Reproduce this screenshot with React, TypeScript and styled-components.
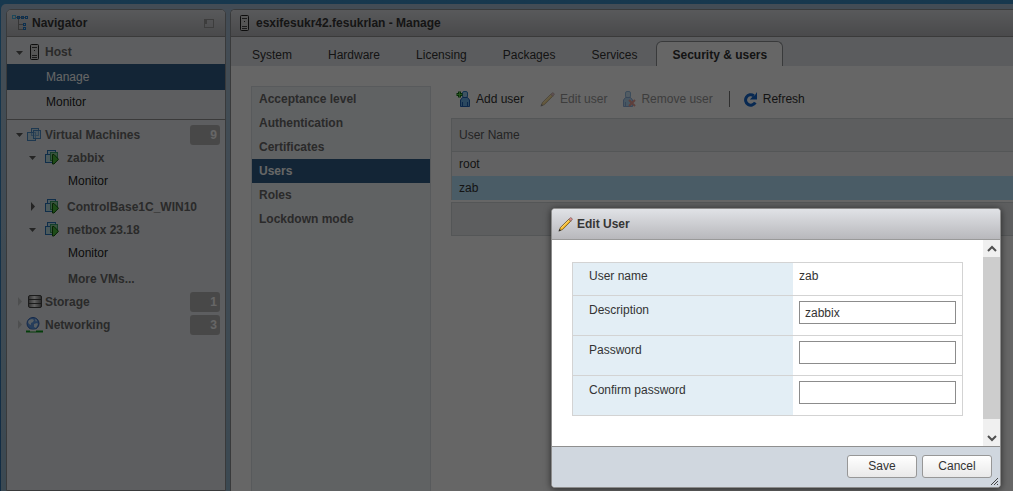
import React from "react";
import styled, { createGlobalStyle } from "styled-components";

const GlobalStyle = createGlobalStyle`
  *, *::before, *::after { box-sizing: border-box; }
  html, body, #root { height: 100%; }
  body {
    margin: 0;
    overflow: hidden;
    font-family: "Liberation Sans", Arial, sans-serif;
    font-size: 12px;
    line-height: 14px;
    color: #333;
  }
  button, input { font: inherit; color: inherit; margin: 0; }
  ul { list-style: none; margin: 0; padding: 0; }
  h1, h2 { font-size: 12px; line-height: 14px; margin: 0; }
  svg { display: block; flex: none; }
`;

/* ---------- shell ---------- */

const Page = styled.div`
  position: relative;
  display: flex;
  flex-direction: column;
  height: 100vh;
  padding: 4px 0 0 1px;
  overflow: hidden;
  background: linear-gradient(#3a8cc4, #2f6ea8);
`;

const Workspace = styled.div`
  flex: 1;
  min-height: 0;
  display: flex;
  gap: 4px;
  padding: 5px 0 0 5px;
  border-top-left-radius: 5px;
  background: linear-gradient(#a9bfd4, #95b6cc);
`;

const Panel = styled.section`
  display: flex;
  flex-direction: column;
  border: 1px solid #8e9195;
  border-bottom: 0;
  border-radius: 5px 5px 0 0;
  overflow: hidden;
`;

const NavPanel = styled(Panel).attrs({ as: "nav" })`
  flex: 0 0 220px;
  border-bottom: 1px solid #8e9195;
  background: #e9ecef;
`;

const MainPanel = styled(Panel).attrs({ as: "main" })`
  flex: 1;
  min-width: 0;
  border-right: 0;
  border-top-right-radius: 0;
  background: #fff;
`;

const PanelHeader = styled.header`
  flex: none;
  display: flex;
  align-items: center;
  gap: 3px;
  height: 27px;
  padding: 0 11px 0 5px;
  border-bottom: 1px solid #929292;
  background: linear-gradient(#dddfe3, #b8b8bc);
`;

const MainHeader = styled(PanelHeader)`
  padding-left: 9px;
  gap: 7px;
`;

const Title = styled.h1`
  flex: 1;
  color: #363636;
`;

/* ---------- navigator ---------- */

const NavGroup = styled.ul<{ $divided?: boolean }>`
  padding: ${(p) => (p.$divided ? "3px 0 5px" : "3px 0")};
  border-bottom: ${(p) => (p.$divided ? "1px solid #929292" : "0")};
`;

const NavRow = styled.li<{ $level: number; $height?: number; $selected?: boolean; $gap?: boolean }>`
  display: flex;
  align-items: center;
  height: ${(p) => p.$height ?? 23}px;
  margin-bottom: ${(p) => (p.$gap ? 3 : 0)}px;
  padding: 0 5px 0 ${(p) => p.$level}px;
  background: ${(p) => (p.$selected ? "#305d87" : "transparent")};
`;

const NavLink = styled.a<{ $tone: "group" | "plain" | "selected" }>`
  flex: 1;
  text-decoration: none;
  white-space: nowrap;
  font-weight: ${(p) => (p.$tone === "group" ? "bold" : "normal")};
  color: ${(p) => ({ group: "#6a6a6a", plain: "#222", selected: "#fff" })[p.$tone]};
`;

const IconSlot = styled.span<{ $width: number }>`
  flex: none;
  display: flex;
  justify-content: center;
  width: ${(p) => p.$width}px;
`;

const Count = styled.span`
  width: 30px;
  height: 20px;
  padding: 3px 3px 0 0;
  border-radius: 3px;
  background: #b5b5b5;
  color: #fff;
  font-weight: bold;
  text-align: right;
`;

/* ---------- main content ---------- */

const Tabs = styled.div`
  flex: none;
  display: flex;
  align-items: flex-end;
  height: 29px;
  padding-left: 3px;
  background: #e4e7eb;
`;

const Tab = styled.button<{ $active?: boolean }>`
  height: 25px;
  margin-left: ${(p) => (p.$active ? 1 : 0)}px;
  padding: 1px ${(p) => (p.$active ? 15 : 17)}px 0;
  border: 1px solid ${(p) => (p.$active ? "#8e9195" : "transparent")};
  border-bottom: 0;
  border-radius: 6px 6px 0 0;
  background: ${(p) => (p.$active ? "#fff" : "transparent")};
  font-weight: ${(p) => (p.$active ? "bold" : "normal")};
  white-space: nowrap;
`;

const Content = styled.div`
  flex: 1;
  min-height: 0;
  display: flex;
  gap: 20px;
  padding: 20px 0 0 20px;
`;

const SideMenu = styled.ul`
  flex: 0 0 180px;
  border: 1px solid #dbe0e6;
  border-bottom: 0;
  background: #f1f4f8;
`;

const SideItem = styled.a<{ $selected?: boolean }>`
  display: block;
  height: 24px;
  padding: 5px 7px;
  font-weight: bold;
  text-decoration: none;
  color: ${(p) => (p.$selected ? "#fff" : "#6a6a6a")};
  background: ${(p) => (p.$selected ? "#305d87" : "transparent")};
`;

const Users = styled.div`
  flex: 1;
  min-width: 0;
`;

const Toolbar = styled.div`
  display: flex;
  align-items: center;
  height: 32px;
  padding: 0 0 6px 5px;
`;

const ToolButton = styled.button`
  display: flex;
  align-items: center;
  gap: 5px;
  height: 22px;
  margin-right: 16px;
  padding: 0;
  border: 0;
  background: none;
  white-space: nowrap;
  &:disabled { color: #999; }
  &:disabled svg { opacity: 0.5; }
`;

const ToolDivider = styled.span`
  width: 1px;
  height: 16px;
  margin-right: 13px;
  background: #777;
`;

const UserTable = styled.table`
  width: 100%;
  border-collapse: separate;
  border-spacing: 0;
  border: 1px solid #d2d6da;
  border-width: 1px 0 0 1px;
  th, td { padding: 0 7px; text-align: left; }
  th {
    height: 33px;
    border-bottom: 1px solid #d2d6da;
    background: #e9ebee;
    font-weight: normal;
    color: #5a5a5a;
  }
`;

const UserRow = styled.tr<{ $selected?: boolean }>`
  height: 24px;
  background: ${(p) => (p.$selected ? "#b9e5ff" : "#f5f6f7")};
`;

const TableFooter = styled.div`
  height: 34px;
  margin-top: 2px;
  border: 1px solid #d2d6da;
  border-right: 0;
  background: #e9ebee;
`;

const Backdrop = styled.div`
  position: absolute;
  inset: 0;
  background: rgba(0, 0, 0, 0.6);
`;

/* ---------- dialog ---------- */

const DialogBox = styled.form`
  position: absolute;
  top: 208px;
  right: 12px;
  width: 450px;
  border: 1px solid #8c8c8c;
  border-radius: 4px;
  overflow: hidden;
  background: #fff;
  box-shadow: 0 1px 7px rgba(0, 0, 0, 0.6);
`;

const DialogHeader = styled.header`
  display: flex;
  align-items: center;
  gap: 4px;
  height: 31px;
  padding: 0 6px;
  border-bottom: 1px solid #999;
  background: linear-gradient(#e0e2e6, #b8b8bc);
`;

const DialogBody = styled.div`
  display: flex;
  justify-content: space-between;
  height: 206px;
  padding: 22px 0 0 20px;
`;

const FormTable = styled.table`
  width: 391px;
  height: 154px;
  table-layout: fixed;
  border-collapse: separate;
  border-spacing: 0;
  border: 1px solid #d3d3d3;
  border-bottom: 0;
  th, td {
    height: 40px;
    padding: 5px 6px 0;
    border-bottom: 1px solid #d3d3d3;
    text-align: left;
    vertical-align: top;
    font-weight: normal;
  }
  th {
    width: 220px;
    padding: 7px 16px 0;
    background: #e3eef5;
  }
  tr:first-child th, tr:first-child td { height: 33px; padding-top: 6px; }
`;

const TextInput = styled.input`
  display: block;
  width: 157px;
  height: 23px;
  padding: 1px 5px 0;
  border: 1px solid #8c8c8c;
  background: #fff;
`;

const ScrollTrack = styled.div`
  display: flex;
  flex-direction: column;
  width: 17px;
  margin-top: -22px;
  background: #f0f0f0;
`;

const ScrollArrow = styled.span`
  display: flex;
  align-items: center;
  justify-content: center;
  height: 17px;
`;

const ScrollThumb = styled.span`
  height: 162px;
  margin-bottom: auto;
  background: #cdcdcd;
`;

const DialogFooter = styled.footer`
  position: relative;
  display: flex;
  justify-content: flex-end;
  gap: 5px;
  height: 41px;
  padding: 8px 8px 0 0;
  border-top: 1px solid #8f8f8f;
  background: #d0d7df;
`;

const DialogButton = styled.button`
  width: 70px;
  height: 23px;
  padding: 0 0 2px;
  border: 1px solid #979797;
  border-radius: 3px;
  background: linear-gradient(#fff, #e9e9e9);
`;

const Grip = styled.svg`
  position: absolute;
  right: 2px;
  bottom: 2px;
`;

/* ---------- icons ---------- */

const Caret = ({ open, faint }: { open?: boolean; faint?: boolean }) => (
  <svg width="9" height="9" viewBox="0 0 9 9">
    <path d={open ? "M1 3h7L4.500 7z" : "M3 0v9l4-4.500z"} fill={faint ? "#c4c6c8" : "#5a5a5a"} />
  </svg>
);

const TreeIcon = () => (
  <svg width="17" height="16" viewBox="0 0 17 16" fill="none" shapeRendering="crispEdges">
    <path d="M6.500 4v10.500H11M6.500 9.500H11" stroke="#888" />
    <path d="M4 2.500h10" stroke="#888" />
    <rect x="0.500" y="0.500" width="3" height="3" stroke="#4bb4e0" />
    <rect x="5.500" y="1.500" width="2" height="2" stroke="#1f78c8" />
    <rect x="9.500" y="1.500" width="2" height="2" stroke="#1f78c8" />
    <rect x="13.500" y="1.500" width="2" height="2" stroke="#1f78c8" />
    <rect x="11.500" y="8.500" width="2" height="2" stroke="#1f78c8" />
    <rect x="11.500" y="12.500" width="2" height="2" stroke="#1f78c8" />
  </svg>
);

const PinIcon = () => (
  <svg width="10" height="9" viewBox="0 0 10 9" shapeRendering="crispEdges">
    <rect x="0.500" y="0.500" width="9" height="8" fill="none" stroke="#999" />
    <rect x="1" y="1" width="2" height="4" fill="#999" />
  </svg>
);

const HostIcon = () => (
  <svg width="9" height="16" viewBox="0 0 9 16">
    <rect x="0.500" y="0.500" width="8" height="15" rx="1" fill="#d4d4d4" stroke="#222" />
    <path d="M2 3.500h5M2 11.500h5M2 13.500h5" stroke="#444" />
    <rect x="4" y="6" width="1" height="1" fill="#333" />
  </svg>
);

const VmsIcon = () => (
  <svg width="15" height="14" viewBox="0 0 15 14" shapeRendering="crispEdges">
    <g fill="#a9d3ee" fillOpacity="0.5" stroke="#4c8cc8">
      <rect x="4.500" y="0.500" width="7" height="7" />
      <rect x="0.500" y="4.500" width="8" height="8" />
      <rect x="6.500" y="2.500" width="7" height="8" />
    </g>
  </svg>
);

const VmOnIcon = () => (
  <svg width="14" height="15" viewBox="0 0 14 15">
    <g shapeRendering="crispEdges">
      <rect x="2.500" y="0.500" width="8" height="7" fill="#bfe0f0" stroke="#2874b8" />
      <rect x="0.500" y="4.500" width="7" height="8" fill="#bde0e6" stroke="#2874b8" />
      <rect x="5.500" y="2.500" width="7" height="8" fill="#8fd09c" stroke="#3aa06a" />
    </g>
    <path d="M7.500 4.500v9.500h1.500L13.500 9.250 9 4.500z" fill="#4cbf3c" stroke="#12550d" />
  </svg>
);

const StorageIcon = () => (
  <svg width="14" height="13" viewBox="0 0 14 13">
    <defs>
      <linearGradient id="disk" x1="0" x2="1" y1="0" y2="0">
        <stop offset="0" stopColor="#777" />
        <stop offset="0.450" stopColor="#f4f4f4" />
        <stop offset="1" stopColor="#666" />
      </linearGradient>
    </defs>
    <rect x="0.500" y="0.500" width="13" height="12" rx="1.500" fill="url(#disk)" stroke="#444" />
    <path d="M1 4.500h12M1 8.500h12" stroke="#444" />
  </svg>
);

const NetworkIcon = () => (
  <svg width="17" height="16" viewBox="0 0 17 16">
    <circle cx="7" cy="6.500" r="6" fill="#5f9ae4" stroke="#2f62b8" />
    <path d="M3 3l3-1 2 1-1 2-2 1v2L3 7 2 5zM8 7l3-1 1 1-2 4-2-1zM9 2l2 1-1 2z" fill="#dcebf8" />
    <path d="M0 14.500h17" stroke="#0c9a1c" strokeWidth="2" />
    <path d="M4 13.500h6" stroke="#f2f2f2" strokeWidth="2" />
  </svg>
);

const Person = () => (
  <>
    <rect x="6.500" y="0.500" width="5" height="6" rx="1.500" fill="#9fd0f2" stroke="#2f80c8" />
    <path d="M4.500 15.500V9l2-2.500h5l2 2.500v6.500z" fill="#6cb4ee" stroke="#1f62b8" />
    <path d="M6.500 11v4.500M11.500 11v4.500" stroke="#1f62b8" />
  </>
);

const AddUserIcon = () => (
  <svg width="15" height="16" viewBox="0 0 15 16">
    <Person />
    <path d="M3.500 0.500v6M0.500 3.500h6" stroke="#17711a" strokeWidth="3" />
    <path d="M3.500 1v5M1 3.500h5" stroke="#5fd04a" />
  </svg>
);

const RemoveUserIcon = () => (
  <svg width="13" height="16" viewBox="4 0 13 16">
    <Person />
    <path d="M10 9l6 6M16 9l-6 6" stroke="#d8402c" strokeWidth="2" />
  </svg>
);

const PencilIcon = () => (
  <svg width="15" height="15" viewBox="0 0 15 15">
    <path d="M1.200 13.800L2.400 10.500 10.800 2.200l2 2L4.500 12.600z" fill="#f3b21c" stroke="#6b5420" strokeWidth="0.800" />
    <path d="M3.300 11L11.200 3.200" stroke="#ffe69a" strokeWidth="0.900" />
    <path d="M10.800 2.200L12.400 0.700q1.900 0 1.900 1.900L12.800 4.200z" fill="#dc8f8c" stroke="#7d5a58" strokeWidth="0.700" />
    <path d="M0.500 14.500l0.900-2.600 1.700 1.700z" fill="#2a2a2a" />
  </svg>
);

const RefreshIcon = () => (
  <svg width="15" height="15" viewBox="0 0 15 15">
    <path d="M12.300 10.500A5.200 5.200 0 1 1 10.800 3.700" fill="none" stroke="#1668cc" strokeWidth="3" />
    <path d="M14 0v7.500H6.800l2.700-2.700L12 3z" fill="#1668cc" />
  </svg>
);

const Chevron = ({ down }: { down?: boolean }) => (
  <svg width="10" height="8" viewBox="0 0 10 8">
    <path d={down ? "M1 2l4 4 4-4" : "M1 6l4-4 4 4"} fill="none" stroke="#505050" strokeWidth="2" />
  </svg>
);

/* ---------- data ---------- */

const tabs = ["System", "Hardware", "Licensing", "Packages", "Services", "Security & users"];
const sections = ["Acceptance level", "Authentication", "Certificates", "Users", "Roles", "Lockdown mode"];

const VmRow = ({ name, open }: { name: string; open?: boolean }) => (
  <NavRow $level={21}>
    <IconSlot $width={9}><Caret open={open} /></IconSlot>
    <IconSlot $width={30}><VmOnIcon /></IconSlot>
    <NavLink href="#" $tone="group">{name}</NavLink>
  </NavRow>
);

const Inventory = ({ name, count, icon, open }: { name: string; count: number; icon: React.ReactNode; open?: boolean }) => (
  <NavRow $level={8}>
    <IconSlot $width={9}><Caret open={open} faint={!open} /></IconSlot>
    <IconSlot $width={21}>{icon}</IconSlot>
    <NavLink href="#" $tone="group">{name}</NavLink>
    <Count>{count}</Count>
  </NavRow>
);

export default function App() {
  return (
    <Page>
      <GlobalStyle />
      <Workspace>
        <NavPanel>
          <PanelHeader>
            <TreeIcon />
            <Title as="h2">Navigator</Title>
            <PinIcon />
          </PanelHeader>
          <NavGroup $divided>
            <NavRow $level={8} $height={24}>
              <IconSlot $width={9}><Caret open /></IconSlot>
              <IconSlot $width={21}><HostIcon /></IconSlot>
              <NavLink href="#" $tone="group">Host</NavLink>
            </NavRow>
            <NavRow $level={39} $height={26} $selected>
              <NavLink href="#" $tone="selected">Manage</NavLink>
            </NavRow>
            <NavRow $level={39} $height={24}>
              <NavLink href="#" $tone="plain">Monitor</NavLink>
            </NavRow>
          </NavGroup>
          <NavGroup>
            <Inventory name="Virtual Machines" count={9} icon={<VmsIcon />} open />
            <VmRow name="zabbix" open />
            <NavRow $level={61} $gap>
              <NavLink href="#" $tone="plain">Monitor</NavLink>
            </NavRow>
            <VmRow name="ControlBase1C_WIN10" />
            <VmRow name="netbox 23.18" open />
            <NavRow $level={61} $gap>
              <NavLink href="#" $tone="plain">Monitor</NavLink>
            </NavRow>
            <NavRow $level={61}>
              <NavLink href="#" $tone="group">More VMs...</NavLink>
            </NavRow>
            <Inventory name="Storage" count={1} icon={<StorageIcon />} />
            <Inventory name="Networking" count={3} icon={<NetworkIcon />} />
          </NavGroup>
        </NavPanel>

        <MainPanel>
          <MainHeader>
            <HostIcon />
            <Title>esxifesukr42.fesukrlan - Manage</Title>
          </MainHeader>
          <Tabs role="tablist">
            {tabs.map((name) => (
              <Tab key={name} type="button" role="tab" $active={name === "Security & users"} aria-selected={name === "Security & users"}>
                {name}
              </Tab>
            ))}
          </Tabs>
          <Content>
            <SideMenu>
              {sections.map((name) => (
                <li key={name}>
                  <SideItem href="#" $selected={name === "Users"}>{name}</SideItem>
                </li>
              ))}
            </SideMenu>
            <Users>
              <Toolbar>
                <ToolButton type="button"><AddUserIcon />Add user</ToolButton>
                <ToolButton type="button" disabled><PencilIcon />Edit user</ToolButton>
                <ToolButton type="button" disabled><RemoveUserIcon />Remove user</ToolButton>
                <ToolDivider />
                <ToolButton type="button"><RefreshIcon />Refresh</ToolButton>
              </Toolbar>
              <UserTable>
                <thead>
                  <tr><th scope="col">User Name</th></tr>
                </thead>
                <tbody>
                  <UserRow><td>root</td></UserRow>
                  <UserRow $selected><td>zab</td></UserRow>
                </tbody>
              </UserTable>
              <TableFooter />
            </Users>
          </Content>
        </MainPanel>
      </Workspace>

      <Backdrop />

      <DialogBox role="dialog" aria-labelledby="dialog-title" onSubmit={(e) => e.preventDefault()}>
        <DialogHeader>
          <PencilIcon />
          <Title as="h2" id="dialog-title">Edit User</Title>
        </DialogHeader>
        <DialogBody>
          <FormTable>
            <tbody>
              <tr>
                <th scope="row">User name</th>
                <td>zab</td>
              </tr>
              <tr>
                <th scope="row"><label htmlFor="description">Description</label></th>
                <td><TextInput id="description" type="text" defaultValue="zabbix" /></td>
              </tr>
              <tr>
                <th scope="row"><label htmlFor="password">Password</label></th>
                <td><TextInput id="password" type="password" /></td>
              </tr>
              <tr>
                <th scope="row"><label htmlFor="confirm">Confirm password</label></th>
                <td><TextInput id="confirm" type="password" /></td>
              </tr>
            </tbody>
          </FormTable>
          <ScrollTrack>
            <ScrollArrow><Chevron /></ScrollArrow>
            <ScrollThumb />
            <ScrollArrow><Chevron down /></ScrollArrow>
          </ScrollTrack>
        </DialogBody>
        <DialogFooter>
          <DialogButton type="submit">Save</DialogButton>
          <DialogButton type="button">Cancel</DialogButton>
          <Grip width="7" height="7" viewBox="0 0 7 7">
            <path d="M0 7L7 0M3 7l4-4M6 7l1-1" stroke="#444" fill="none" />
          </Grip>
        </DialogFooter>
      </DialogBox>
    </Page>
  );
}
